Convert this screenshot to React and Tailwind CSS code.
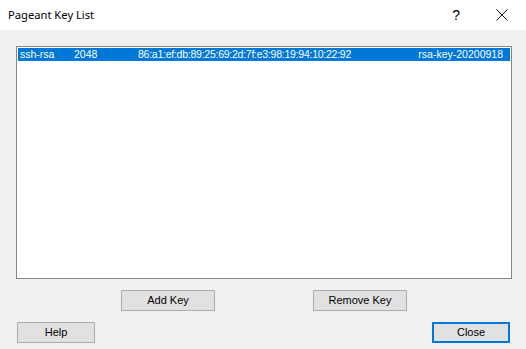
import React from 'react';

const keys = [
  {
    type: 'ssh-rsa',
    bits: '2048',
    fingerprint: '86:a1:ef:db:89:25:69:2d:7f:e3:98:19:94:10:22:92',
    comment: 'rsa-key-20200918',
  },
];

const Button = ({ children, primary, className = '' }) => (
  <button
    className={`h-[21px] bg-[#e1e1e1] text-[11px] text-black ${
      primary ? 'border-2 border-[#0078d7]' : 'border border-[#adadad]'
    } ${className}`}
  >
    {children}
  </button>
);

const App = () => {
  return (
    <div
      className="w-[526px] h-[349px] flex flex-col bg-[#f0f0f0] overflow-hidden"
      style={{ fontFamily: '"Liberation Sans", Arial, sans-serif' }}
    >
      {/* Title bar */}
      <div className="h-[30px] bg-white flex items-center shrink-0">
        <span
          className="pl-[8px] text-[11.2px] text-black"
          style={{ fontFamily: '"Noto Sans", "Open Sans", sans-serif' }}
        >
          Pageant Key List
        </span>
        <span className="ml-auto mr-[36px] text-[14px] text-black leading-none">?</span>
        <svg className="mr-[18px]" width="12" height="12" viewBox="0 0 12 12">
          <path d="M0.5 0.5 L11.5 11.5 M11.5 0.5 L0.5 11.5" stroke="#111" strokeWidth="1" />
        </svg>
      </div>

      {/* Body */}
      <div className="flex-1 flex flex-col px-[16px] pt-[16px]">
        <div className="w-[496px] h-[233px] bg-white border border-[#828790] p-px">
          {keys.map((k) => (
            <div
              key={k.fingerprint}
              className="h-[13px] flex items-center bg-[#0078d7] text-white text-[10.5px] leading-none"
            >
              <span className="w-[56px] pl-[2px]">{k.type}</span>
              <span className="w-[64px]">{k.bits}</span>
              <span className="w-[280px] tracking-[-0.25px]">{k.fingerprint}</span>
              <span className="ml-auto pr-[7px]">{k.comment}</span>
            </div>
          ))}
        </div>

        <div className="flex mt-[11px]">
          <Button className="w-[94px] ml-[105px]">Add Key</Button>
          <Button className="w-[94px] ml-[98px]">Remove Key</Button>
        </div>

        <div className="flex justify-between mt-[11px] pl-px">
          <Button className="w-[78px]">Help</Button>
          <Button primary className="w-[78px]">Close</Button>
        </div>
      </div>
    </div>
  );
};

export default App;
